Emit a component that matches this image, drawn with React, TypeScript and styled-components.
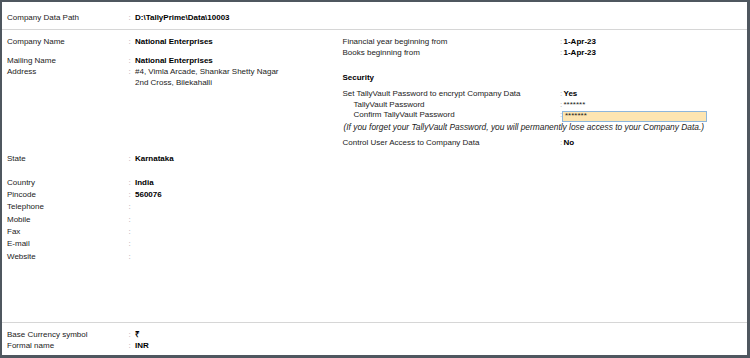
import React from "react";
import styled, { createGlobalStyle } from "styled-components";

const Global = createGlobalStyle`
  html, body { margin: 0; padding: 0; background: #fff; }
  body { font-family: "Liberation Sans", Arial, sans-serif; font-size: 8px; color: #222; }
`;

const Frame = styled.div`
  box-sizing: border-box;
  width: 750px;
  height: 358px;
  border-style: solid;
  border-color: #4f575f;
  border-width: 2px 3px 3px 2px;
  display: flex;
  flex-direction: column;
  background: #fff;
`;

const Header = styled.div`
  box-sizing: border-box;
  height: 28px;
  padding: 10px 0 0 5px;
  border-bottom: 1px solid #d6d6d6;
`;

const Main = styled.div`
  flex: 1;
  display: grid;
  grid-template-columns: 335.5px 1fr;
  padding-left: 5px;
  border-bottom: 1px solid #d6d6d6;
`;

const Footer = styled.div`
  box-sizing: border-box;
  height: 32px;
  padding: 5.8px 0 0 5px;
`;

const Column = styled.div`
  display: flex;
  flex-direction: column;
`;

const Field = styled.div<{ $h: number; $mt?: number; $label: number; $colon: number }>`
  display: grid;
  grid-template-columns: ${(p) => p.$label}px ${(p) => p.$colon}px 1fr;
  line-height: ${(p) => p.$h}px;
  margin-top: ${(p) => p.$mt ?? 0}px;
  white-space: nowrap;
`;

const Label = styled.span<{ $indent?: number }>`
  color: #222;
  padding-left: ${(p) => p.$indent ?? 0}px;
`;

const Colon = styled.span`
  color: #a8a8a8;
`;

const Value = styled.span<{ $bold?: boolean }>`
  color: ${(p) => (p.$bold ? "#000" : "#222")};
  font-weight: ${(p) => (p.$bold ? 700 : 400)};
`;

const MultiValue = styled.div`
  display: flex;
  flex-direction: column;
  color: #222;
`;

const Heading = styled.div<{ $mt: number }>`
  font-weight: 700;
  color: #000;
  line-height: 11px;
  margin-top: ${(p) => p.$mt}px;
`;

const Note = styled.div<{ $mt: number }>`
  font-style: italic;
  font-size: 8.4px;
  color: #222;
  line-height: 11px;
  margin-top: ${(p) => p.$mt}px;
  padding-left: 1px;
  white-space: nowrap;
`;

const InputBox = styled.span`
  box-sizing: border-box;
  display: block;
  width: 145px;
  height: 10.5px;
  margin: 1px 0 0 -1.5px;
  padding-left: 2px;
  background: #fde5b1;
  border: 1px solid #8db6dc;
  line-height: 8px;
  color: #222;
`;

type LProps = { label: string; value?: React.ReactNode; bold?: boolean; h: number; mt?: number };

const LeftField = ({ label, value, bold, h, mt }: LProps) => (
  <Field $h={h} $mt={mt} $label={121.5} $colon={6.5}>
    <Label>{label}</Label>
    <Colon>:</Colon>
    <Value $bold={bold}>{value}</Value>
  </Field>
);

type RProps = LProps & { indent?: number };

const RightField = ({ label, value, bold, h, mt, indent }: RProps) => (
  <Field $h={h} $mt={mt} $label={217.5} $colon={3.5}>
    <Label $indent={indent}>{label}</Label>
    <Colon>:</Colon>
    <Value $bold={bold}>{value}</Value>
  </Field>
);

export default function App() {
  return (
    <>
      <Global />
      <Frame>
        <Header>
          <LeftField label="Company Data Path" value="D:\TallyPrime\Data\10003" bold h={11} />
        </Header>
        <Main>
          <Column>
            <LeftField label="Company Name" value="National Enterprises" bold h={10.7} mt={7.2} />
            <LeftField label="Mailing Name" value="National Enterprises" bold h={10.7} mt={8.3} />
            <Field $h={10.7} $label={121.5} $colon={6.5}>
              <Label>Address</Label>
              <Colon>:</Colon>
              <MultiValue>
                <span>#4, Vimla Arcade, Shankar Shetty Nagar</span>
                <span>2nd Cross, Bilekahalli</span>
              </MultiValue>
            </Field>
            <LeftField label="State" value="Karnataka" bold h={12.3} mt={65.1} />
            <LeftField label="Country" value="India" bold h={12.3} mt={11.2} />
            <LeftField label="Pincode" value="560076" bold h={12.3} />
            <LeftField label="Telephone" h={12.3} />
            <LeftField label="Mobile" h={12.3} />
            <LeftField label="Fax" h={12.3} />
            <LeftField label="E-mail" h={12.3} />
            <LeftField label="Website" h={12.3} />
          </Column>
          <Column>
            <RightField label="Financial year beginning from" value="1-Apr-23" bold h={11} mt={6} />
            <RightField label="Books beginning from" value="1-Apr-23" bold h={11} />
            <Heading $mt={14.4}>Security</Heading>
            <RightField label="Set TallyVault Password to encrypt Company Data" value="Yes" bold h={10.4} mt={5.9} />
            <RightField label="TallyVault Password" value="*******" h={10.4} indent={11} />
            <Field $h={10.4} $label={217.5} $colon={3.5}>
              <Label $indent={11}>Confirm TallyVault Password</Label>
              <Colon>:</Colon>
              <InputBox>*******</InputBox>
            </Field>
            <Note $mt={0.6}>
              (If you forget your TallyVault Password, you will permanently lose access to your Company Data.)
            </Note>
            <RightField label="Control User Access to Company Data" value="No" bold h={11} mt={3.6} />
          </Column>
        </Main>
        <Footer>
          <LeftField label="Base Currency symbol" value="₹" bold h={11.4} />
          <LeftField label="Formal name" value="INR" bold h={11.4} />
        </Footer>
      </Frame>
    </>
  );
}
